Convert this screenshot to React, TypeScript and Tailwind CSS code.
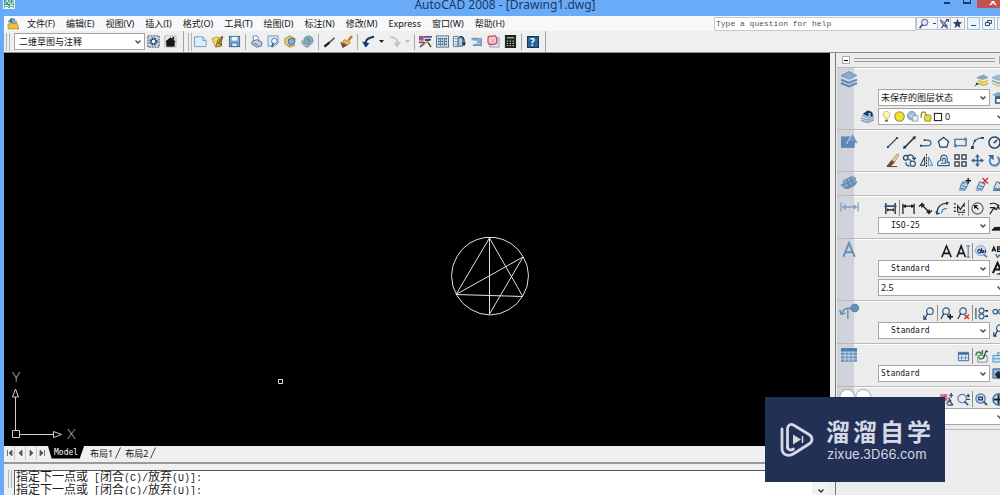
import type { ReactNode } from "react";
import clsx from "clsx";

const NAVY = "#1d3a5f";
const BLUE = "#5b86b5";

// All glyphs are drawn on a 14x14 grid, stroked in navy unless stated otherwise.
const glyphs: Record<string, ReactNode> = {
  gear: (
    <>
      <rect x="1" y="1" width="12" height="12" stroke="#333" strokeDasharray="2 1" fill="#c9dcef" />
      <circle cx="7" cy="7" r="3.500" stroke="#3b5878" strokeWidth="2" strokeDasharray="2 .8" />
      <circle cx="7" cy="7" r="2.500" fill="#e8f0f8" />
    </>
  ),
  home: (
    <>
      <rect x="1" y="1" width="12" height="12" stroke="#777" strokeDasharray="1 1" />
      <path d="M2 7l5-4 5 4h-1v5H3V7z" fill="#161616" stroke="#161616" />
      <path d="M10 2v3" stroke="#161616" strokeWidth="2" />
    </>
  ),
  newFile: <path d="M.5 2h9L13 6v6.500H.5zM9.500 2v4H13" fill="#dceefb" stroke="#6f98bd" />,
  open: (
    <>
      <path d="M1 4l5-2 3 1-4 10z" fill="#f3d873" stroke="#a3842f" strokeWidth=".8" />
      <path d="M5 13l2-7 5-5-1 11z" fill="#d6a638" stroke="#7a5e1b" strokeWidth=".8" />
      <path d="M8 9l5-7M12 11L9 9" stroke="#333" />
    </>
  ),
  save: (
    <>
      <rect x="1.500" y="1.500" width="11" height="11" fill="#7ea9d4" stroke="#3d6692" />
      <rect x="4" y="2" width="6" height="4" fill="#eef5fb" stroke="none" />
      <rect x="4" y="8.500" width="6" height="4" fill="#dbe8f4" stroke="#3d6692" />
    </>
  ),
  print: (
    <>
      <path d="M4 6L3 1h5l2 5" fill="#fff" stroke="#75839c" />
      <path d="M2 7l5-2 6 3-1 4-5 1-5-3z" fill="#c3cce2" stroke="#566994" />
      <path d="M4 9l5 2" stroke="#566994" />
    </>
  ),
  preview: (
    <>
      <path d="M1 1h11v8l-4 3H1z" fill="#d5e8f8" stroke="#7397bb" />
      <circle cx="8" cy="6.500" r="3" fill="#f2f9ff" stroke="#4e7099" />
      <path d="M7 9l-2 4" stroke="#3e5f86" strokeWidth="2" />
    </>
  ),
  publish: (
    <>
      <path d="M1 4l5-3 6 3-1 5-6 3-4-3z" fill="#ecd56c" stroke="#8c8044" />
      <circle cx="8" cy="7" r="3.500" fill="#86add6" stroke="#44688f" />
      <path d="M2 10l4 3 6-2" stroke="#c59f30" strokeWidth="1.500" />
    </>
  ),
  globe: (
    <>
      <circle cx="8" cy="6" r="5" fill="#7fabcd" stroke="#60829f" strokeWidth=".8" />
      <path d="M6 3c2 1 1 3 4 4" stroke="#6a9f50" strokeWidth="2" />
      <path d="M1 6l3 3 4 1v3H5L1 9z" fill="#a9b6c4" stroke="#5f7387" strokeWidth=".7" />
    </>
  ),
  pen: (
    <>
      <path d="M12.500 3L7 8" stroke="#7b4a2a" strokeWidth="1.700" />
      <path d="M7 8l-5.500 4.500" stroke="#1c1c1c" strokeWidth="2.500" />
    </>
  ),
  brush: (
    <>
      <path d="M13 1L9 6" stroke="#cc762a" strokeWidth="2.500" />
      <path d="M5 5l6 3-3 3-5-4z" fill="#f3c645" stroke="#8b5d25" strokeWidth=".8" />
      <path d="M1 8l6 3-4 2.500z" fill="#a23a2a" stroke="#65291b" strokeWidth=".8" />
    </>
  ),
  undo: (
    <>
      <path d="M5 12C2 8 5 2.500 13 2" stroke="#173a70" strokeWidth="2.200" />
      <path d="M0 7l4 6.500L8 9z" fill="#173a70" stroke="none" />
    </>
  ),
  redo: (
    <>
      <path d="M9 12c3-4 1-9-7-10" stroke="#c2c5c9" strokeWidth="2" />
      <path d="M14 7l-4 6.500L6 9z" fill="#c2c5c9" stroke="none" />
    </>
  ),
  properties: (
    <>
      <path d="M0 1h5v5H0z" fill="#b34a80" stroke="none" />
      <path d="M5 2h9M6 5h6M0 8h6" stroke="#6b4b9c" strokeWidth="2" />
      <path d="M7 6l6-1M7 8l-6 5M9 7l4 6" stroke="#333" strokeWidth="1.400" />
      <path d="M5 10l5-3" stroke="#d8a22a" strokeWidth="1.400" />
    </>
  ),
  center: (
    <>
      <rect x=".5" y="1" width="13" height="12" fill="#dfeaf4" stroke="#4a698c" />
      <path d="M5 3v9M9 3v9" stroke="#4a698c" />
      <path d="M2 4h2M6 4h2M10 4h2M2 7h2M6 7h2M10 7h2M2 10h2M6 10h2M10 10h2" stroke="#35557c" strokeWidth="1.600" />
    </>
  ),
  palettes: (
    <>
      <path d="M.5 1.500h5v11h-5zM2 4h2M2 7h2M2 10h2" stroke="#4d779e" />
      <path d="M5.500 3h5v9h-5z" fill="#a8cbea" stroke="#355d86" />
      <path d="M7 2c5-1 5 3 5 6" stroke="#222" strokeWidth="1.300" />
      <path d="M9.500 8H14l-2 4z" fill="#222" stroke="none" />
    </>
  ),
  sheets: (
    <>
      <path d="M1 3h10l1 8H4z" fill="#a7c2d9" stroke="none" />
      <path d="M2 4h8M4 7h8M3 11h9M12 3v9" stroke="#6e93b2" strokeWidth="1.500" />
      <path d="M2 6l7 1-5 3z" fill="#eff6fa" stroke="none" />
    </>
  ),
  markup: (
    <>
      <path d="M3 3h10v10H3z" fill="#dce7f0" stroke="#8d9cb0" />
      <path d="M1.500 2c2-2 4 1 5-1 4-1 4 3 4 5 1 4-3 4-5 4-5 1-5-3-4-8z" fill="#f3d3d8" stroke="#cf5167" strokeWidth="1.500" />
      <path d="M4 4l4 4M8 4L4 8" stroke="#dd8592" />
    </>
  ),
  calc: (
    <>
      <rect x="1.500" y=".5" width="11" height="13" fill="#1c1c1c" stroke="#1c1c1c" />
      <path d="M3 3h8" stroke="#7ec06a" strokeWidth="1.600" />
      <path d="M3 6.500h8M3 9h8M3 11.500h8" stroke="#f4f4f4" strokeDasharray="1.500 1.600" />
    </>
  ),
  star: <path d="M7 1l1.700 4.200L13 5.400 9.700 8.200l1.100 4.600L7 10.200l-3.800 2.600 1.100-4.600L1 5.400l4.300-.2z" fill="#2f4474" stroke="none" />,
  search: (
    <>
      <circle cx="8.500" cy="5.500" r="4" fill="#dae4f5" stroke="#5e6f9e" strokeWidth="1.300" />
      <path d="M6 8l-4 5" stroke="#3d4c7c" strokeWidth="2.200" />
    </>
  ),
  satellite: (
    <>
      <path d="M2 2c0 5 4 9 9 8z" fill="#8fa5c4" stroke="#324a77" />
      <path d="M7 6l4-4M3 13l3-4 5 4M9 2h3v3" stroke="#324a77" strokeWidth="1.500" />
    </>
  ),
  layers: (
    <>
      <path d="M0 4l7-3.500L14 4 7 7z" fill="#86abd0" stroke="#5581ad" strokeWidth=".6" />
      <path d="M0 7.500L7 10.500l7-3M0 10.500L7 13.500l7-3" stroke={BLUE} strokeWidth="1.800" />
    </>
  ),
  layersGold: (
    <>
      <path d="M2 4l7-3 5 3-6 2z" fill="#83a9bb" stroke="#5d7c8a" strokeWidth=".5" />
      <path d="M3 7l6 2 5-2" stroke="#e0c935" strokeWidth="2" />
      <path d="M4 10l5 2 5-2" stroke="#c8b13a" strokeWidth="1.600" />
      <path d="M0 13l3-3M1 10h2v2" stroke="#222" />
    </>
  ),
  layersStack: (
    <>
      <path d="M0 4l7-3 7 3-7 3z" fill="#9fbad4" stroke="#6f93b5" strokeWidth=".6" />
      <path d="M0 7l7 3 7-3" stroke="#88a8c5" strokeWidth="1.700" />
      <path d="M0 10l7 3 7-3" stroke="#cfc05a" strokeWidth="1.500" />
    </>
  ),
  layersBack: (
    <>
      <path d="M0 8.500l7 2.500 7-3M0 11l7 2.500 7-3" stroke="#7fa3c5" strokeWidth="1.600" />
      <path d="M1 6l6-2 7 2-7 3z" fill="#a8c2dc" stroke="#5a80a8" strokeWidth=".6" />
      <path d="M11 7c2-4-1-6-5-4" stroke="#173a70" strokeWidth="2" />
      <path d="M8 0L2 4l6 3z" fill="#173a70" stroke="none" />
    </>
  ),
  layerState: (
    <>
      <path d="M0 4l7-3 7 3-7 3z" fill="#7ea5cc" stroke="none" />
      <path d="M4 6.500h9v6.500H4z" fill="#f0f6fc" stroke="#30598a" strokeWidth="1.600" />
      <path d="M4 7.500h9" stroke="#30598a" strokeWidth="2" />
    </>
  ),
  bulb: (
    <>
      <path d="M5 8.500C1 5 3 .5 7 .5s6 4.500 2 8l-.5 2h-3z" fill="#fbf6b4" stroke="#b0a763" />
      <path d="M5 12.500h4" stroke="#666" strokeWidth="2" />
    </>
  ),
  sun: <circle cx="7" cy="7" r="6" fill="#ece336" stroke="#98922d" strokeWidth="1.300" />,
  freeze: (
    <>
      <circle cx="6" cy="6" r="5.500" fill="#9cb8c9" stroke="#6f8da1" />
      <path d="M7 6h7v7H7z" fill="#e5eef4" stroke="#7698af" />
      <path d="M3 4l3 3M8 3L5 7" stroke="#f4f9fc" />
    </>
  ),
  lock: (
    <>
      <path d="M1.500 9V5c0-5 6-5 6 0v3" stroke="#a39720" strokeWidth="1.800" />
      <rect x="6" y="5" width="8" height="8" rx="1.500" fill="#e8da3c" stroke="#8c7f18" />
    </>
  ),
  swatch: <rect x="2" y="2" width="10" height="10" fill="#fff" stroke="#222" strokeWidth="1.500" />,
  shapes: (
    <>
      <path d="M0 3h8v10H0z" fill="#5d88b5" stroke="none" />
      <path d="M10 0l5 9H5z" fill="#7199c3" stroke="#e9eff5" strokeWidth=".6" />
      <path d="M6 7h6v6H6z" fill="#5d88b5" stroke="none" />
    </>
  ),
  line: (
    <>
      <path d="M2 12L12 2" strokeWidth="1.300" />
      <path d="M1 11h2v2H1zM11 1h2v2h-2z" fill={NAVY} stroke="none" />
    </>
  ),
  xline: (
    <>
      <path d="M2 12L12 2" stroke="#222" strokeWidth="1.500" />
      <path d="M0 14l1-4 3 3zM14 0l-1 4-3-3z" fill={NAVY} stroke="none" />
    </>
  ),
  pline: (
    <>
      <path d="M2 10.500h6c5 0 5-6 0-6H6" stroke="#4a6f9b" strokeWidth="1.500" />
      <path d="M0 9.500h2v2H0zM4 3.500h2v2H4z" fill={NAVY} stroke="none" />
    </>
  ),
  polygon: <path d="M7 1.500l5.500 4.500-2 6h-7l-2-6z" fill="#eef3f8" strokeWidth="1.300" />,
  rect: (
    <>
      <path d="M1 3.500h12v7H1z" stroke="#3a5470" strokeWidth="1.200" />
      <path d="M0 9h3v3H0zM11 2h3v3h-3z" fill={BLUE} stroke="none" />
    </>
  ),
  arc: (
    <>
      <path d="M2 12C2 6 6 2 12 2" stroke="#315b88" strokeWidth="1.300" />
      <path d="M0 11h3v3H0zM3 4h2v2H3zM11 1h3v2h-3z" fill={NAVY} stroke="none" />
    </>
  ),
  circle: (
    <>
      <circle cx="7" cy="7" r="6" strokeWidth="1.500" />
      <path d="M7 7l3-3M6 7h2" strokeWidth="1.500" />
    </>
  ),
  erase: (
    <>
      <path d="M12 0L6 7l3 2 5-8z" fill="#e8d29b" stroke="#8d7640" strokeWidth=".7" />
      <path d="M6 7l3 2-4 4H1z" fill="#6b4a3b" stroke="#5c3a28" strokeWidth=".7" />
      <path d="M1 13.500h11" stroke="#444" />
    </>
  ),
  copy: (
    <>
      <circle cx="3" cy="4" r="2.500" strokeWidth="1.300" />
      <circle cx="10.500" cy="10.500" r="2.800" stroke="#315b88" strokeWidth="1.300" />
      <path d="M5 2c3-2 7-1 7 3M3 9c0 3 2 4 4 4M6 6l3 1M10 4l2 2 2-2" strokeWidth="1.200" />
    </>
  ),
  mirror: (
    <>
      <path d="M5 3v9H.5z" strokeWidth="1.100" />
      <path d="M9 3v9h4.500z" stroke={BLUE} strokeWidth="1.100" />
      <path d="M7 0v14" stroke="#222" strokeDasharray="2 1" />
    </>
  ),
  offset: (
    <>
      <path d="M1 12.500h12v-3.500h-2V5c0-5-7-5-7 0v2C1 7 0 10 1 12.500z" stroke="#2f6591" strokeWidth="1.300" />
      <path d="M4 10h5V6c0-2-3-2-3 0v2" stroke="#2f6591" strokeWidth="1.200" />
    </>
  ),
  array: <path d="M1 1h4.500v4.500H1zM8.500 1H13v4.500H8.500zM1 8.500h4.500V13H1zM8.500 8.500H13V13H8.500z" stroke="#26323f" strokeWidth="1.300" />,
  move: (
    <>
      <path d="M7 1v12M1 7h12" stroke="#356597" strokeWidth="1.600" />
      <path d="M4.500 3.500L7 0l2.500 3.500zM4.500 10.500L7 14l2.500-3.500zM3.500 4.500L0 7l3.500 2.500zM10.500 4.500L14 7l-3.500 2.500z" fill="#356597" stroke="none" />
    </>
  ),
  rotate: (
    <>
      <path d="M4 3c-4 3-2 9.500 3 9.500s7-6 3-9.500" stroke="#5d8abb" strokeWidth="2.200" />
      <path d="M0 1h6v6z" fill="#356597" stroke="none" />
    </>
  ),
  surfaces: (
    <>
      <path d="M2 5l8-4 3 2-2 2 3 1-2 3-6 3-3-1-3-2 2-2z" fill="#86a6c5" stroke="#6387ab" strokeWidth=".7" />
      <path d="M1 9l12-5M3 12l10-5M5 4l3 7M8 2l3 7" stroke="#5d82a8" />
    </>
  ),
  blockAdd: (
    <>
      <path d="M2 11l3-7 6 2-3 6z" fill="#c6dcef" stroke="#3b6b97" />
      <path d="M4 8l5 2M5 5l2 2M1 13h7" stroke="#3b6b97" />
      <path d="M11 0v6M8 3h6" stroke="#111" strokeWidth="1.500" />
    </>
  ),
  blockDel: (
    <>
      <path d="M2 11l3-7 6 2-3 6z" fill="#c6dcef" stroke="#3b6b97" />
      <path d="M4 8l5 2M1 13h7" stroke="#3b6b97" />
      <path d="M8 0l6 6M14 0L8 6" stroke="#d92c2c" strokeWidth="1.500" />
    </>
  ),
  blockEdit: (
    <>
      <path d="M2 11l3-7 6 2-3 6z" fill="#c6dcef" stroke="#3b6b97" />
      <path d="M8 6l4-4M1 13h10" stroke="#2a4564" strokeWidth="1.300" />
    </>
  ),
  dimension: <path d="M0 3v8M15 3v8M1 7h13M4 5L2 7l2 2M11 5l2 2-2 2" stroke="#7f9fc1" strokeWidth="1.100" />,
  dimQuick: (
    <>
      <path d="M2 1v12M12 1v12M2 4.500h10M4 8.500h6M4 7v3M10 7v3" stroke="#111" strokeWidth="1.300" />
      <path d="M0 4.500h14" stroke="#2e66a4" />
    </>
  ),
  dimLinear: <path d="M1 2v11M13 2v11M2 4.500h10M4 3L2 4.500 4 6M10 3l2 1.500L10 6" stroke="#161616" strokeWidth="1.300" />,
  dimAligned: <path d="M0 5l4-4M10 13l4-4M3 3l8 8M3 6V3h3M8 11h3V8" stroke="#161616" strokeWidth="1.400" />,
  dimArc: (
    <>
      <path d="M1 12C1 5 5 2 12 1M0 10l1 3 3-1M11 0l2 1-2 2" stroke="#24364c" strokeWidth="1.300" />
      <path d="M6 12c0-3 2-5 6-5" stroke="#2e7bb7" strokeWidth="1.300" />
    </>
  ),
  dimOrdinate: (
    <>
      <path d="M5 11V4l3 4 4-6v3M5 11h8" stroke="#222" strokeWidth="1.200" />
      <path d="M1 2h2M1 6h2M1 10h2M6 13.500h1M10 13.500h1M11 9h2" stroke="#222" strokeWidth="1.500" />
    </>
  ),
  dimRadius: (
    <>
      <circle cx="7" cy="7" r="6" stroke="#46586c" strokeWidth="1.200" />
      <path d="M8 8L4 4M4 7V4h3" stroke="#111" strokeWidth="1.300" />
    </>
  ),
  dimJogged: <path d="M2 2c6-2 10 1 10 6M2 13l4-6 3 1 3-5M2 6h6" stroke="#222" strokeWidth="1.300" />,
  letterA: <path d="M2 13L7 1l5 12M4 9h6" stroke="#181818" strokeWidth="1.700" />,
  letterBlue: <path d="M2 13L7 1l5 12M4 9h6" stroke="#648eba" strokeWidth="1.700" />,
  letterEdit: (
    <>
      <path d="M0 13L4.500 1 9 13M2 9h5" stroke="#181818" strokeWidth="1.700" />
      <path d="M10 1h4M12 1v12M10 13h4" stroke="#3b6290" />
    </>
  ),
  textFind: (
    <>
      <circle cx="6" cy="6" r="5.500" fill="#cedff0" stroke="#8ba4be" />
      <path d="M3 7c0-3 3-3 3 0s-3 2-3 0M7 3v5h2V6H7M12 6h-1v2h1" stroke="#1d3b66" strokeWidth="1.200" />
      <path d="M9 10l4 3" stroke="#6787a8" strokeWidth="2" />
    </>
  ),
  spell: (
    <>
      <path d="M0 7l2-5 2 5M.5 5.500h3M6 2v5h3V2zM6 4.500h3M14 2h-2v5h2" stroke="#111" strokeWidth="1.300" />
      <path d="M4 10l2 3 6-5" stroke="#2e7bb7" strokeWidth="1.700" />
    </>
  ),
  textStyle: (
    <>
      <path d="M1 12L6 1l5 11M3 8h6" stroke="#111" strokeWidth="2.200" />
      <path d="M4 13.500l9-4v4z" fill="#111" stroke="none" />
    </>
  ),
  dimStyle: <path d="M0 12h14V5l-4 4H3z" fill="#1b1b1b" stroke="#1b1b1b" />,
  leader: (
    <>
      <path d="M1 8c1-4 4-5 9-4M6 13V5M-1 5l1 4 4-1" stroke="#6387ab" strokeWidth="1.200" />
      <circle cx="12" cy="3.500" r="3.300" fill="#6791bf" stroke="#5a82aa" />
    </>
  ),
  leaderNew: (
    <>
      <circle cx="8.500" cy="4.500" r="3.500" stroke="#2f628f" strokeWidth="1.300" />
      <path d="M6 7l-3 6M2 9v4h3" strokeWidth="1.300" />
    </>
  ),
  leaderAdd: (
    <>
      <circle cx="6.500" cy="4.500" r="3.500" stroke="#2f628f" strokeWidth="1.300" />
      <path d="M4 7l-3 6M8 8l1 2" strokeWidth="1.300" />
      <path d="M11 7.500v6M8 10.500h6" stroke="#111" strokeWidth="1.600" />
    </>
  ),
  leaderDel: (
    <>
      <circle cx="6.500" cy="4.500" r="3.500" stroke="#2f628f" strokeWidth="1.300" />
      <path d="M4 7l-3 6" strokeWidth="1.300" />
      <path d="M8 8l5 5M13 8l-5 5" stroke="#d92c2c" strokeWidth="1.500" />
    </>
  ),
  leaderAlign: (
    <>
      <path d="M1 1v12" stroke="#222" />
      <circle cx="7" cy="4" r="2.700" stroke="#2f628f" strokeWidth="1.300" />
      <circle cx="7" cy="10" r="2.700" stroke="#2f628f" strokeWidth="1.300" />
      <path d="M11 4h3M11 10h3" stroke="#222" strokeWidth="1.500" />
    </>
  ),
  leaderJoin: (
    <>
      <circle cx="3.500" cy="5" r="2.500" stroke="#2f628f" strokeWidth="1.300" />
      <circle cx="9.500" cy="5" r="2.500" stroke="#2f628f" strokeWidth="1.300" />
    </>
  ),
  table: (
    <>
      <path d="M0 1h14v12H0z" fill="#6c95c0" stroke="none" />
      <path d="M0 1h14v3H0z" fill="#4f7cab" stroke="none" />
      <path d="M0 4.500h14M0 7.500h14M0 10.500h14M3.500 4v9M7 4v9M10.500 4v9" stroke="#d3e0ed" strokeWidth=".7" />
    </>
  ),
  tableNew: (
    <>
      <path d="M1.500 2.500h11v9h-11z" fill="#e7f1fa" stroke="#3b6794" />
      <path d="M2 4h10" stroke="#3b6794" strokeWidth="2" />
      <path d="M2 8.500h10M5 4v8M9 4v8" stroke="#6c94bd" />
    </>
  ),
  tableLink: (
    <>
      <path d="M3 6h10v7H3z" fill="#eef3f6" stroke="#738394" />
      <path d="M1 6c0-4 4-5 6-2M5 4h3V0M10 7c-2 4-6 3-6 0" stroke="#2d8c3c" strokeWidth="1.600" />
      <path d="M9 9l3-8 2 1" stroke="#444" strokeWidth="1.400" />
    </>
  ),
  tableOut: <path d="M1 6h12v7H1zM1 9.500h12M6 6V3h7" fill="#bfe1f2" stroke="#5291b4" />,
  tableStyle: (
    <>
      <path d="M1 2h12v10H1z" fill="#8eb1d4" stroke="#365e89" />
      <path d="M3 8l4-4 3 3 3-1v6H6z" fill="#182b45" stroke="none" />
    </>
  ),
  orbit: (
    <>
      <path d="M0 1h8v8H0z" fill="#d8848e" stroke="none" />
      <path d="M2 4l5 3M6 2L2 9" stroke="#b04a58" strokeWidth="1.500" />
      <path d="M7 12l3-4 4 5M8 13h6M12 0v5M10 2.500h4M9 5l3 4" stroke="#334d74" strokeWidth="1.500" />
    </>
  ),
  zoomRt: (
    <>
      <circle cx="5.500" cy="6" r="4.500" fill="#e3edf8" stroke="#5f7ea6" strokeWidth="1.300" />
      <path d="M8 9l4 4" stroke="#3d5c86" strokeWidth="2" />
      <path d="M12 1v4M10 3h4M10 7h4" stroke="#222" />
    </>
  ),
  zoomWin: (
    <>
      <circle cx="6" cy="6" r="5" fill="#c4daf0" stroke="#4e6f9b" strokeWidth="1.300" />
      <path d="M4 4.500h4v3H4z" stroke="#1d3b66" strokeWidth="1.300" />
      <path d="M9 9l4 4" stroke="#3d5c86" strokeWidth="2.200" />
    </>
  ),
  zoomExt: (
    <>
      <circle cx="7" cy="7" r="6" fill="#c4daf0" stroke="#334d74" strokeWidth="1.300" />
      <path d="M7 2v10M2 7h10" stroke="#122440" strokeWidth="2" />
    </>
  ),
  lens: (
    <>
      <circle cx="5.500" cy="6" r="6.500" fill="#fff" stroke="#a0b1c2" />
      <circle cx="19.500" cy="6" r="6.500" fill="#fff" stroke="#b0bdc9" />
    </>
  ),
};

function Glyph({ name, className = "size-3.5" }: { name: string; className?: string }) {
  return (
    <svg viewBox="0 0 14 14" fill="none" stroke={NAVY} className={clsx("shrink-0 overflow-visible", className)} aria-hidden="true">
      {glyphs[name]}
    </svg>
  );
}

function Tool({ name }: { name: string }) {
  if (name === "|") return <span className="h-4 w-px shrink-0 bg-[#8d8d8d]" />;
  return (
    <button aria-label={name} className="flex h-4 w-[17px] shrink-0 items-center justify-center">
      <Glyph name={name} className="size-[13px]" />
    </button>
  );
}

function Divider() {
  return <span className="mx-0.5 h-4 w-px shrink-0 bg-[#a9a9a9]" />;
}

function Grip() {
  return (
    <span className="flex shrink-0 gap-0.5">
      <span className="h-[18px] w-px bg-[#b4b4b4]" />
      <span className="h-[18px] w-px bg-[#b4b4b4]" />
    </span>
  );
}

function DropArrow({ label, faded }: { label: string; faded?: boolean }) {
  return (
    <button aria-label={label} className="flex h-4 w-[9px] shrink-0 items-center justify-center">
      <svg viewBox="0 0 5 3" className={clsx("h-[3px] w-[5px]", faded ? "fill-[#bbb]" : "fill-[#222]")}>
        <path d="M0 0h5L2.500 3z" />
      </svg>
    </button>
  );
}

type ComboProps = { label: string; value: string; mono?: boolean; indent?: boolean; className?: string; children?: ReactNode };

function Combo({ label, value, mono, indent, className, children }: ComboProps) {
  return (
    <div className={clsx("relative flex h-[17px] shrink-0 items-center border border-[#a5a5a5] bg-white", className)}>
      {children}
      <select
        aria-label={label}
        className={clsx(
          "h-full min-w-0 flex-1 appearance-none bg-transparent text-[#111] outline-none",
          mono ? "font-['DejaVu_Sans_Mono',monospace] text-[8px]" : "text-[9px]",
          indent ? "pl-3" : "pl-0.5",
        )}
      >
        <option>{value}</option>
      </select>
      <svg viewBox="0 0 6 4" className="pointer-events-none absolute right-[3px] h-1 w-1.5" fill="none" stroke="#444" strokeWidth="1.300">
        <path d="M.5.5L3 3 5.500.5" />
      </svg>
    </div>
  );
}

function Section({ icon, children }: { icon: string; children: ReactNode }) {
  return (
    <section className="flex w-[170px] border-t border-[#b9b9b9]">
      <div className="w-[17px] shrink-0 bg-[#d0d4da] pt-[3px] pl-1">
        <Glyph name={icon} className="size-4" />
      </div>
      <div className="flex min-w-0 flex-1 flex-col border-t border-white pt-0.5 pb-0.5">{children}</div>
    </section>
  );
}

function ToolRow({ items, className }: { items: string[]; className?: string }) {
  return (
    <div className={clsx("flex h-[18px] items-center justify-end", className)}>
      {items.map((item, i) => (
        <Tool key={i} name={item} />
      ))}
    </div>
  );
}

function TitleBar() {
  return (
    <header className="flex h-4 shrink-0 items-start bg-[#6aabf8]">
      <svg viewBox="0 0 14 10" className="ml-[3px] h-2.5 w-3.5 shrink-0">
        <path d="M0 0h12v9H0z" fill="#e8f6f0" />
        <path d="M1 0h10v8H1z" fill="#3b9180" />
        <path d="M2 4l2-4 2 4M7 0v4h3V0M2 5.500h3v2H2zM7 5.500h3v2H7z" fill="none" stroke="#e8f6f0" />
      </svg>
      <h1 className="flex-1 pl-14 text-center text-[12px] leading-[10px] text-[#173a68]">AutoCAD 2008 - [Drawing1.dwg]</h1>
      <button aria-label="Minimize" className="flex h-2 w-5 justify-center pt-0.5">
        <span className="h-0.5 w-1.5 bg-[#1c3c66]" />
      </button>
      <button aria-label="Maximize" className="flex h-2 w-5 justify-center">
        <span className="h-1 w-2 border border-t-0 border-b-2 border-[#1c3c66]" />
      </button>
      <button aria-label="Close" className="flex h-2 w-[23px] items-center justify-center bg-[#c75050]">
        <svg viewBox="0 0 8 6" className="ml-2 h-1.5 w-2" stroke="#fff" strokeWidth="1.600">
          <path d="M1-2l6 6M7-2L1 4" />
        </svg>
      </button>
    </header>
  );
}

const menus = ["文件(F)", "编辑(E)", "视图(V)", "插入(I)", "格式(O)", "工具(T)", "绘图(D)", "标注(N)", "修改(M)", "Express", "窗口(W)", "帮助(H)"];

function MenuBar() {
  return (
    <nav className="flex h-[15px] shrink-0 items-center bg-[#f7f8f9] text-[9px] text-[#151515]">
      <svg viewBox="0 0 12 13" className="ml-[3px] h-[13px] w-3 shrink-0">
        <path d="M1 5l3-4 4 1v5z" fill="#3f76b5" />
        <path d="M5 2l5 2v5H5z" fill="#87acd0" />
        <path d="M1 7l9-1 2 6H1z" fill="#edc334" stroke="#9c7a1a" strokeWidth=".6" />
      </svg>
      <div className="ml-2 flex gap-[11px]">
        {menus.map((menu) => (
          <button key={menu} className="whitespace-nowrap leading-[14px]">
            {menu}
          </button>
        ))}
      </div>
      <input
        aria-label="Help search"
        placeholder="Type a question for help"
        className="ml-auto h-[14px] w-[202px] border border-[#c4cbd4] bg-white pl-px font-['Liberation_Mono',monospace] text-[8px] outline-none placeholder:text-[#555]"
      />
      <div className="flex h-[13px] items-center divide-x divide-[#b8bdc8] border border-[#b8bdc8] bg-[#f6f6fa]">
        <button aria-label="Search" className="flex w-[21px] items-center gap-1 pl-px">
          <Glyph name="search" className="size-[11px]" />
          <span className="h-px w-[3px] bg-[#444]" />
        </button>
        <button aria-label="Communication Center" className="flex w-[13px] justify-center">
          <Glyph name="satellite" className="size-[11px]" />
        </button>
        <button aria-label="Favorites" className="flex w-[13px] justify-center">
          <Glyph name="star" className="size-[11px]" />
        </button>
      </div>
      <div className="ml-0.5 flex w-[33px] shrink-0 gap-0.5 overflow-hidden">
        <button aria-label="Minimize drawing" className="flex h-[13px] w-[13px] shrink-0 items-end justify-center border border-[#a4c0d8] bg-[#eaf4fc] pb-[3px]">
          <span className="h-px w-[5px] bg-[#334d70]" />
        </button>
        <button aria-label="Restore drawing" className="flex h-[13px] w-[13px] shrink-0 items-center justify-center border border-[#a4c0d8] bg-[#eaf4fc]">
          <svg viewBox="0 0 7 7" className="size-[7px]" fill="none" stroke="#334d70">
            <path d="M2.500 2V.5h4v3H5M.5 2.500h4v3h-4z" />
          </svg>
        </button>
        <button aria-label="Close drawing" className="h-[13px] w-[13px] shrink-0 border border-[#a4c0d8] bg-[#eaf4fc]" />
      </div>
    </nav>
  );
}

function Toolbar() {
  return (
    <div className="flex h-[22px] shrink-0 border-b border-[#8c8c8c] bg-[#efefef]">
      <div className="flex items-center border-r border-[#a5a5a5] pr-1 pl-0.5">
        <Grip />
        <Combo label="Workspace" value="二维草图与注释" className="ml-1 w-[131px] pl-0.5" />
        <Tool name="gear" />
        <Tool name="home" />
      </div>
      <div className="flex items-center border-r border-[#a5a5a5] pr-1 pl-1">
        <Grip />
        <Tool name="newFile" />
        <Tool name="open" />
        <Tool name="save" />
        <Divider />
        <Tool name="print" />
        <Tool name="preview" />
        <Tool name="publish" />
        <Tool name="globe" />
        <Divider />
        <Tool name="pen" />
        <Tool name="brush" />
        <Divider />
        <Tool name="undo" />
        <DropArrow label="Undo list" />
        <Tool name="redo" />
        <DropArrow label="Redo list" faded />
        <Divider />
        <Tool name="properties" />
        <Tool name="center" />
        <Tool name="palettes" />
        <Tool name="sheets" />
        <Tool name="markup" />
        <Tool name="calc" />
        <Divider />
        <button aria-label="Help" className="flex h-4 w-[17px] items-center justify-center">
          <span className="flex h-3 w-3 items-center justify-center border border-[#12365f] bg-[#28639c] text-[10px] leading-none font-bold text-white">?</span>
        </button>
      </div>
    </div>
  );
}

function Drawing() {
  return (
    <div className="min-h-0 flex-1 overflow-hidden bg-black">
      <svg className="size-full" fill="none" stroke="#e0e0e0" role="img" aria-label="Model space">
        <path d="M481 184.500h10l8 2 8 4 7 6 5 7 4 9 1.500 10-1.500 11-4 9-6 8-8 6-9 4-10 1.500-10-1.500-9-4-8-6-6-8-4-9-1.500-11 1.500-10 4-9 5-7 7-6 8-4z" />
        <path d="M485.500 184.500v77M485.500 185L452 241.500M485.500 185l33 58M452 241.500l67 2M452 241.500L519 204M519 204l-33.500 57" />
        <path d="M274.500 326.500h4v4h-4z" />
        <path d="M8.500 377.500h7v7h-7zM11.500 377v-33M11.500 336l-3 8h6zM15 381.500h34M49.500 378.500v6l8-3z" stroke="#cfcfcf" />
        <g fill="#c4c4c4" stroke="none" className="font-['Lato',sans-serif] text-[14px] font-light">
          <text x="8" y="329">
            Y
          </text>
          <text x="63" y="386">
            X
          </text>
        </g>
      </svg>
    </div>
  );
}

function LayoutTabs() {
  return (
    <div className="flex h-[14px] shrink-0 items-stretch bg-[#efefef] text-[9px] text-[#111]">
      <div className="flex divide-x divide-[#c8c8c8]">
        {["M2.500 1v6M7 1v6L4 4z", "M6 1v6L3 4z", "M3 1v6l3-3z", "M2 1v6l3-3zM6.500 1v6"].map((d) => (
          <button key={d} aria-label="Scroll tabs" className="flex w-[11px] items-center justify-center">
            <svg viewBox="0 0 9 8" className="h-2 w-[9px]" fill="#555" stroke="#555" strokeWidth=".8">
              <path d={d} />
            </svg>
          </button>
        ))}
      </div>
      <button className="mr-0.5 bg-black px-1.5 font-['DejaVu_Sans_Mono',monospace] text-[8px] text-white [clip-path:polygon(0_0,100%_0,88%_90%,10%_90%)]">
        Model
      </button>
      {["布局1", "布局2"].map((tab) => (
        <div key={tab} className="flex items-center">
          <button className="pr-0.5 pl-1 leading-[13px]">{tab}</button>
          <svg viewBox="0 0 6 12" className="h-3 w-1.5" stroke="#444">
            <path d="M.5 11.500L5.500.5" />
          </svg>
        </div>
      ))}
    </div>
  );
}

function Prompt() {
  return (
    <p className="font-['Liberation_Mono','Noto_Sans_CJK_SC',monospace] text-[10px] leading-[12px] whitespace-pre">
      <span className="text-[12px]">指定下一点或</span>
      {" ["}
      <span className="text-[12px]">闭合</span>
      {"(C)/"}
      <span className="text-[12px]">放弃</span>
      {"(U)]:"}
    </p>
  );
}

function CommandLine() {
  return (
    <div className="shrink-0 border-t-2 border-[#9a9a9a] bg-[#efefef] pt-1.5 pr-px pl-1">
      <div className="flex h-[25px] gap-0.5">
        <Grip />
        <div className="flex min-w-0 flex-1 border-t border-l border-[#555] bg-white">
          <div className="flex-1 pt-px pl-px text-[#1c1c1c]">
            <Prompt />
            <Prompt />
          </div>
          <button aria-label="Scroll down" className="flex w-[17px] items-end justify-center bg-[#f2f2f2] pb-0.5">
            <svg viewBox="0 0 6 4" className="h-1 w-1.5" fill="none" stroke="#333" strokeWidth="1.400">
              <path d="M.5.5L3 3 5.500.5" />
            </svg>
          </button>
        </div>
      </div>
    </div>
  );
}

function Dashboard() {
  return (
    <aside className="w-[165px] shrink-0 overflow-hidden border-l border-[#777] bg-[#ececec] pl-px">
      <div className="flex h-[14px] w-[170px] items-center gap-1 pl-[5px]">
        <button aria-label="Collapse" className="flex size-2 items-center justify-center border border-[#aaa] bg-white">
          <span className="h-px w-1 bg-black" />
        </button>
        <span className="h-1 w-[142px] border-y border-[#9c9c9c]" />
        <span className="size-2 border border-[#aaa] bg-white" />
      </div>

      <Section icon="layers">
        <ToolRow items={["layersGold", "layersStack"]} />
        <div className="mb-0.5 flex justify-end">
          <Combo label="Layer state" value="未保存的图层状态" className="w-[112px]" />
          <Tool name="layerState" />
        </div>
        <div className="mb-0.5 flex items-center justify-end">
          <Tool name="layersBack" />
          <Combo label="Layer" value="0" className="ml-0.5 w-[129px] pl-0.5">
            {["bulb", "sun", "freeze", "lock"].map((name) => (
              <Glyph key={name} name={name} className="mr-0.5 size-[11px]" />
            ))}
            <Glyph name="swatch" className="size-[10px]" />
          </Combo>
        </div>
      </Section>

      <Section icon="shapes">
        <ToolRow items={["line", "xline", "pline", "polygon", "rect", "arc", "circle"]} className="pr-1" />
        <ToolRow items={["erase", "copy", "mirror", "offset", "array", "move", "rotate"]} className="pr-1" />
      </Section>

      <Section icon="surfaces">
        <ToolRow items={["blockAdd", "blockDel", "blockEdit"]} />
      </Section>

      <Section icon="dimension">
        <ToolRow items={["dimQuick", "|", "dimLinear", "dimAligned", "dimArc", "dimOrdinate", "|", "dimRadius", "dimJogged"]} className="pr-1" />
        <div className="mb-0.5 flex justify-end">
          <Combo label="Dimension style" value="ISO-25" mono indent className="w-[112px]" />
          <Tool name="dimStyle" />
        </div>
      </Section>

      <Section icon="letterBlue">
        <ToolRow items={["letterA", "letterEdit", "|", "textFind", "spell"]} />
        <div className="mb-0.5 flex justify-end">
          <Combo label="Text style" value="Standard" mono indent className="w-[112px]" />
          <Tool name="textStyle" />
        </div>
        <Combo label="Text height" value="2.5" className="mb-0.5 w-[129px] self-end" />
      </Section>

      <Section icon="leader">
        <ToolRow items={["leaderNew", "|", "leaderAdd", "leaderDel", "|", "leaderAlign", "leaderJoin"]} />
        <div className="mb-0.5 flex justify-end">
          <Combo label="Leader style" value="Standard" mono indent className="w-[112px]" />
          <Tool name="leaderNew" />
        </div>
      </Section>

      <Section icon="table">
        <ToolRow items={["tableNew", "|", "tableLink", "tableOut"]} />
        <div className="mb-0.5 flex justify-end">
          <Combo label="Table style" value="Standard" mono className="w-[112px]" />
          <Tool name="tableStyle" />
        </div>
      </Section>

      <Section icon="lens">
        <ToolRow items={["orbit", "zoomRt", "|", "zoomWin", "zoomExt"]} />
        <Combo label="View" value="" className="mb-0.5 w-[129px] self-end" />
      </Section>
      <div className="w-[170px] border-t border-[#b9b9b9]" />
    </aside>
  );
}

function Watermark() {
  return (
    <div className="absolute right-[55px] bottom-[13px] flex h-[85px] w-[180px] items-center bg-[#233056] pr-3.5 pl-[15px] text-[#d5d9e3]">
      <svg viewBox="0 0 34 36" className="h-9 w-[34px] shrink-0" fill="none" stroke="currentColor">
        <path d="M7.500 26V6.500C8 3 10.500 1.500 13.500 3L29 12.500c4 2.500 4 7 0 9.500L14 31.500c-6 4-12 1-12-5V7" strokeWidth="2.800" strokeLinecap="round" />
        <path d="M7.500 24c0 4 3 5 6 3" strokeWidth="2.800" strokeLinecap="round" />
        <path d="M13 12.500l8 5-8 5z" fill="currentColor" stroke="none" />
        <path d="M22.500 14v7" strokeWidth="1.500" />
      </svg>
      <div className="ml-3 flex-1">
        <p className="flex justify-between text-[24px] leading-7 font-bold">
          {["溜", "溜", "自", "学"].map((char, i) => (
            <span key={i}>{char}</span>
          ))}
        </p>
        <p className="pl-px font-['Inter',sans-serif] text-[13px] leading-4">zixue.3D66.com</p>
      </div>
    </div>
  );
}

export default function App() {
  return (
    <div className="relative flex h-screen flex-col overflow-hidden bg-[#efefef] font-['Noto_Sans','Noto_Sans_CJK_SC',sans-serif]">
      <TitleBar />
      <div className="flex min-h-0 flex-1 flex-col border-l-4 border-[#6aabf8]">
        <MenuBar />
        <Toolbar />
        <main className="flex min-h-0 flex-1">
          <div className="mr-[5px] flex min-w-0 flex-1 flex-col">
            <Drawing />
            <LayoutTabs />
            <div className="h-0.5 shrink-0" />
            <CommandLine />
          </div>
          <Dashboard />
        </main>
      </div>
      <Watermark />
    </div>
  );
}
